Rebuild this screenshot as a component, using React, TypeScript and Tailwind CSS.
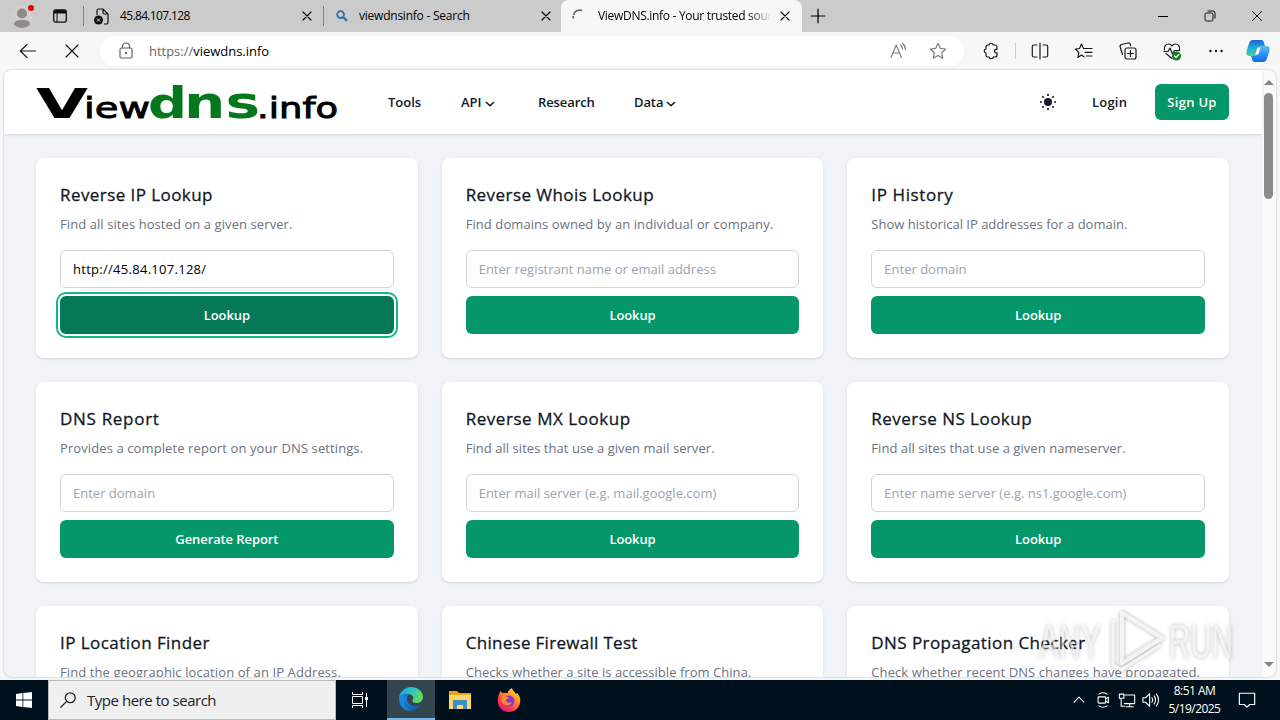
import type { ReactNode } from "react";

type Tool = {
  title: string;
  titleClass: string;
  text: string;
  textClass: string;
  placeholder?: string;
  value?: string;
  action: string;
  focused?: boolean;
};

const tools: Tool[] = [
  {
    title: "Reverse IP Lookup",
    titleClass: "tracking-[0.43px]",
    text: "Find all sites hosted on a given server.",
    textClass: "tracking-[0.08px]",
    value: "http://45.84.107.128/",
    action: "Lookup",
    focused: true,
  },
  {
    title: "Reverse Whois Lookup",
    titleClass: "tracking-[0.45px]",
    text: "Find domains owned by an individual or company.",
    textClass: "tracking-[0.08px]",
    placeholder: "Enter registrant name or email address",
    action: "Lookup",
  },
  {
    title: "IP History",
    titleClass: "tracking-[0.6px]",
    text: "Show historical IP addresses for a domain.",
    textClass: "tracking-[0px]",
    placeholder: "Enter domain",
    action: "Lookup",
  },
  {
    title: "DNS Report",
    titleClass: "tracking-[0.7px]",
    text: "Provides a complete report on your DNS settings.",
    textClass: "tracking-[0.1px]",
    placeholder: "Enter domain",
    action: "Generate Report",
  },
  {
    title: "Reverse MX Lookup",
    titleClass: "tracking-[0.55px]",
    text: "Find all sites that use a given mail server.",
    textClass: "tracking-[0.05px]",
    placeholder: "Enter mail server (e.g. mail.google.com)",
    action: "Lookup",
  },
  {
    title: "Reverse NS Lookup",
    titleClass: "tracking-[0.47px]",
    text: "Find all sites that use a given nameserver.",
    textClass: "tracking-[0.05px]",
    placeholder: "Enter name server (e.g. ns1.google.com)",
    action: "Lookup",
  },
  {
    title: "IP Location Finder",
    titleClass: "tracking-[0.45px]",
    text: "Find the geographic location of an IP Address.",
    textClass: "tracking-[0.1px]",
    placeholder: "Enter IP",
    action: "Lookup",
  },
  {
    title: "Chinese Firewall Test",
    titleClass: "tracking-[0.3px]",
    text: "Checks whether a site is accessible from China.",
    textClass: "tracking-[0.04px]",
    placeholder: "Enter domain",
    action: "Lookup",
  },
  {
    title: "DNS Propagation Checker",
    titleClass: "tracking-[0.43px]",
    text: "Check whether recent DNS changes have propagated.",
    textClass: "tracking-[0.07px]",
    placeholder: "Enter domain",
    action: "Lookup",
  },
];

function Stroke({ className, width = 1.2, children }: { className: string; width?: number; children: ReactNode }) {
  return (
    <svg
      viewBox="0 0 20 20"
      className={`shrink-0 ${className}`}
      fill="none"
      stroke="currentColor"
      strokeWidth={width}
      strokeLinecap="round"
      strokeLinejoin="round"
      aria-hidden="true"
    >
      {children}
    </svg>
  );
}

function CloseIcon({ className }: { className: string }) {
  return (
    <Stroke className={className} width={2.2}>
      <path d="M2 2l16 16M18 2L2 18" />
    </Stroke>
  );
}

function TabStrip() {
  return (
    <div className="flex h-8 shrink-0 bg-[#cbcbcb] text-[12px] text-black">
      <div className="flex w-[83px] items-center">
        <svg viewBox="0 0 24 24" className="ml-2.5 h-6 w-6 shrink-0" aria-hidden="true">
          <circle cx="12" cy="13" r="11" fill="#d2cfce" />
          <circle cx="12" cy="9.500" r="5" fill="#8f8b89" />
          <path d="M4 20.500c0-4 4-4.500 8-4.500s8 .5 8 4.500c-2 2.500-5 3.300-8 3.300s-6-.8-8-3.300z" fill="#8f8b89" />
          <circle cx="21" cy="4" r="3" fill="#e3000f" />
        </svg>
        <svg viewBox="0 0 14 14" className="ml-[19px] h-3.5 w-3.5 shrink-0" aria-hidden="true">
          <rect x=".7" y=".9" width="12.600" height="12.200" rx="2" fill="none" stroke="#111" strokeWidth="1.300" />
          <path d="M1 4.500V3a2 2 0 012-2h8a2 2 0 012 2v1.500z" fill="#111" />
          <path d="M4 4v9" stroke="#111" />
        </svg>
      </div>
      <div className="flex w-60 items-center">
        <span className="h-5 w-px bg-[#858585]" />
        <svg viewBox="0 0 16 17" className="ml-2.5 h-[17px] w-4 shrink-0" aria-hidden="true">
          <path
            d="M3 7V2.500A1.500 1.500 0 014.500 1H9l5 5v8.500a1.500 1.500 0 01-1.500 1.500H10M9 1v3.500A1.500 1.500 0 0010.500 6H14"
            fill="none"
            stroke="#111"
            strokeWidth="1.200"
          />
          <circle cx="4.500" cy="12" r="4.500" fill="#111" />
          <path d="M3 10.500l3 3M6 10.500l-3 3" stroke="#ddd" />
        </svg>
        <span className="ml-2.5 w-44 whitespace-nowrap tracking-[-0.65px]">45.84.107.128</span>
        <CloseIcon className="ml-1.5 h-2.5 w-2.5" />
      </div>
      <div className="flex w-[238px] items-center">
        <span className="h-5 w-px bg-[#858585]" />
        <svg viewBox="0 0 12 12" className="ml-3 h-3 w-3 shrink-0" fill="none" stroke="#2f72ae" aria-hidden="true">
          <circle cx="4.600" cy="4.600" r="3.400" strokeWidth="1.800" />
          <path d="M7.300 7.300l3.600 3.600" strokeWidth="2.200" />
        </svg>
        <span className="ml-[11px] w-[178px] whitespace-nowrap tracking-[-0.23px]">viewdnsinfo - Search</span>
        <CloseIcon className="ml-1 h-2.5 w-2.5" />
      </div>
      <div className="flex w-[241px] items-center rounded-t-lg bg-[#f7f7f7]">
        <svg viewBox="0 0 16 16" className="ml-2.5 h-4 w-4 shrink-0" fill="none" stroke="#666" aria-hidden="true">
          <path d="M2.200 10.500v-2.500M2.500 7A6.500 6.500 0 0111 2.500" strokeWidth="1.700" />
        </svg>
        <span className="ml-[11px] w-[174px] overflow-hidden bg-linear-to-r from-black from-86% to-transparent bg-clip-text tracking-[-0.3px] whitespace-nowrap text-transparent">
          ViewDNS.info - Your trusted source
        </span>
        <CloseIcon className="ml-2 h-2.5 w-2.5" />
      </div>
      <Stroke className="mt-2 ml-2 h-4 w-4" width={1.5}>
        <path d="M1.500 10h17M10 1.500v17" />
      </Stroke>
      <div className="ml-auto flex items-center">
        <span className="mr-9 h-px w-2.5 bg-black" />
        <svg viewBox="0 0 12 12" className="mr-[35px] h-3 w-3" fill="none" stroke="#111" aria-hidden="true">
          <rect x="1" y="3" width="8" height="8" rx="1.500" />
          <path d="M3.500 1H9a2 2 0 012 2v5.500" />
        </svg>
        <svg viewBox="0 0 12 12" className="mr-[17px] h-3 w-3" stroke="#111" aria-hidden="true">
          <path d="M1 1l10 10M11 1L1 11" />
        </svg>
      </div>
    </div>
  );
}

function Toolbar() {
  return (
    <div className="flex h-[38px] shrink-0 items-center bg-[#f7f7f7] text-[#1a1a1a]">
      <Stroke className="ml-[18px] h-5 w-5">
        <path d="M2.500 10h15M9 3.500L2.300 10 9 16.500" />
      </Stroke>
      <Stroke className="ml-6 h-5 w-5">
        <path d="M4 4l12 12M16 4L4 16" />
      </Stroke>
      <div className="ml-[18px] flex h-[30px] w-[864px] items-center rounded-full bg-white">
        <Stroke className="ml-4 h-5 w-5 text-[#666]">
          <path d="M6.500 7V5.500a3.500 3.500 0 017 0V7" />
          <rect x="4" y="7" width="12" height="10" rx="1.500" />
          <circle cx="10" cy="12" r=".6" fill="currentColor" />
        </Stroke>
        <span className="mt-px ml-[13px] text-[13px] tracking-[-0.02px] text-[#666]">
          https://<span className="text-black">viewdns.info</span>
        </span>
        <Stroke className="ml-auto h-5 w-5 text-[#7d7d7d]">
          <path d="M3 16.500L8.200 4l5.200 12.500M5 12h6.500M12.500 4c1.300.9 1.900 2.200 2 4M14.500 2.500c2 1.500 3 3.300 3 6" />
        </Stroke>
        <Stroke className="mr-4 ml-5 h-5 w-5 text-[#7d7d7d]">
          <path d="M10 2.300l2.300 5 5.400.7-4 3.800 1 5.500-4.700-2.700-4.700 2.700 1-5.500-4-3.800 5.400-.7z" />
        </Stroke>
      </div>
      <Stroke className="ml-[17px] h-5 w-5">
        <path d="M6.500 4H8a2.200 2.200 0 014.300 0H14a2 2 0 012 2v2.300h-1.200a1.800 1.800 0 000 3.500H16V14a2 2 0 01-2 2h-1.600a2.200 2.200 0 01-4.300 0H6.500a1.500 1.500 0 01-1.500-1.500v-2.400a2.200 2.200 0 010-4.300V5.500A1.500 1.500 0 016.500 4z" />
      </Stroke>
      <span className="ml-3.5 h-4 w-px bg-[#ccc]" />
      <Stroke className="ml-3.5 h-5 w-5">
        <path d="M10 2v16M7 4H3.800A1.500 1.500 0 002.300 5.500v9A1.500 1.500 0 003.800 16H7M13 4h3.200a1.500 1.500 0 011.500 1.500v9a1.500 1.500 0 01-1.500 1.500H13" />
      </Stroke>
      <Stroke className="ml-6 h-5 w-5">
        <path d="M12 7.500L9.500 7.500 7.500 3 5.500 7.500 1.500 8.200l3.300 3.300-.9 5L7.500 14l2.500 1.800M12 7.500h6M11 11.300h7M12.500 15H18" />
      </Stroke>
      <Stroke className="ml-6 h-5 w-5">
        <rect x="7" y="7" width="11" height="11" rx="2" />
        <path d="M12.500 9.500v6M9.500 12.500h6M4.500 13.500L2.200 6a2 2 0 011.300-2.500L10 2a2 2 0 012.300 1.300l.4 1.400" />
      </Stroke>
      <Stroke className="ml-6 h-5 w-5">
        <path d="M2.500 9C1.500 5.500 4 3 6.500 3c1.700 0 2.800.8 3.500 2 .7-1.200 1.800-2 3.500-2C16 3 18.500 5.500 17.500 9M2 10.500h4L8 7l2.500 6 2-3.500h5M4 12.500l6 5" />
        <circle cx="14.500" cy="15" r="4.500" fill="#14801c" stroke="none" />
        <path d="M12.500 15l1.500 1.500 2.700-3" stroke="white" />
      </Stroke>
      <svg viewBox="0 0 16 4" className="ml-[26px] h-1 w-4" fill="#111" aria-hidden="true">
        <circle cx="2.500" cy="2" r="1.200" />
        <circle cx="8" cy="2" r="1.200" />
        <circle cx="13.500" cy="2" r="1.200" />
      </svg>
      <svg viewBox="0 0 24 24" className="ml-[22px] h-6 w-6 shrink-0" aria-hidden="true">
        <defs>
          <linearGradient id="copilotLeft" x1="0" y1="0" x2="0" y2="1">
            <stop stopColor="#1466d8" />
            <stop offset=".5" stopColor="#23a9d8" />
            <stop offset="1" stopColor="#4bd39a" />
          </linearGradient>
          <linearGradient id="copilotRight" x1="0" y1="0" x2="0" y2="1">
            <stop stopColor="#52bdf5" />
            <stop offset="1" stopColor="#1267e9" />
          </linearGradient>
        </defs>
        <path d="M7 1h8c2 0 2.500 1.200 3 3l1 3h-3c-2 0-3 1-3.600 3L11 15c-.5 1.500-1.300 2-3 2H3.500C.5 17 0 14.500.6 12L3 4.500C3.700 2.300 4.800 1 7 1z" fill="url(#copilotLeft)" />
        <path d="M17 23H9c-2 0-2.500-1.200-3-3l-1-3h3c2 0 3-1 3.600-3L13 9c.5-1.500 1.300-2 3-2h4.500c3 0 3.500 2.500 2.900 5L21 19.500c-.7 2.200-1.800 3.500-4 3.500z" fill="url(#copilotRight)" />
        <path d="M11.500 8.500h3l-2.200 7H9.300z" fill="white" />
      </svg>
    </div>
  );
}

function Logo() {
  return (
    <svg viewBox="0 -20 302 80" className="h-20 w-[302px] shrink-0" role="img" aria-label="ViewDNS.info">
      <g fontFamily="'DejaVu Sans', sans-serif" fontWeight="700">
        <text x="0" y="36" fontSize="41" textLength="52" lengthAdjust="spacingAndGlyphs">V</text>
        <text x="48" y="36" fontSize="29" fontWeight="400" stroke="black" strokeWidth=".9" textLength="66" lengthAdjust="spacingAndGlyphs">iew</text>
        <text x="112" y="36" fontSize="43" fill="#06781c" textLength="39" lengthAdjust="spacingAndGlyphs">d</text>
        <text x="148" y="36" fontSize="45" fill="#06781c" textLength="76" lengthAdjust="spacingAndGlyphs">ns</text>
        <text x="221" y="36" fontSize="28" fontWeight="400" stroke="black" strokeWidth=".9" textLength="81" lengthAdjust="spacingAndGlyphs">.info</text>
      </g>
    </svg>
  );
}

function Chevron() {
  return (
    <Stroke className="mt-0.5 ml-[3px] h-2.5 w-2.5" width={3.2}>
      <path d="M3 7l7 6.500L17 7" />
    </Stroke>
  );
}

function SiteHeader() {
  return (
    <header className="relative z-10 flex h-16 shrink-0 items-center bg-white pr-[33px] pl-8 text-[13px] font-semibold text-[#111827] shadow">
      <Logo />
      <nav className="mt-0.5 ml-[50px] flex items-center" aria-label="Main navigation">
        <a href="#" className="w-[73px]">Tools</a>
        <a href="#" className="flex w-[77px] items-center">
          API
          <Chevron />
        </a>
        <a href="#" className="w-24 tracking-[-0.1px]">Research</a>
        <a href="#" className="flex items-center tracking-[-0.1px]">
          Data
          <Chevron />
        </a>
      </nav>
      <svg viewBox="0 0 16 16" className="ml-auto h-4 w-4" fill="#111827" aria-hidden="true">
        <circle cx="8" cy="8" r="4" />
        <path
          d="M8 0v2M8 14v2M0 8h2M14 8h2M2.300 2.300l1.400 1.400M12.300 12.300l1.400 1.400M13.700 2.300l-1.400 1.400M3.700 12.300l-1.400 1.400"
          stroke="#111827"
          strokeWidth="1.700"
        />
      </svg>
      <a href="#" className="mt-0.5 ml-9 w-[63px] tracking-[0.2px]">Login</a>
      <a
        href="#"
        className="flex h-9 w-[74px] items-center justify-center rounded-md bg-[#059669] pt-0.5 tracking-[0.3px] text-white"
      >
        Sign Up
      </a>
    </header>
  );
}

function ToolCard({ tool }: { tool: Tool }) {
  return (
    <section className="h-[200px] rounded-lg bg-white p-6 shadow-sm">
      <h2
        className={`-mt-px text-[17px] leading-7 font-medium whitespace-nowrap text-[#111827] [-webkit-text-stroke:0.3px_#111827] ${tool.titleClass}`}
      >
        {tool.title}
      </h2>
      <p className={`mt-[5px] text-[13px] leading-5 whitespace-nowrap text-[#6b7280] ${tool.textClass}`}>
        {tool.text}
      </p>
      <input
        type="text"
        aria-label={tool.title}
        defaultValue={tool.value}
        placeholder={tool.placeholder}
        className={`mt-4 block h-[38px] w-full rounded-md border border-[#d1d5db] bg-white px-3 text-[13px] text-black placeholder:text-[#9ca3af] ${
          tool.value ? "tracking-[0.28px]" : ""
        }`}
      />
      <button
        type="button"
        className={`mt-2 block h-[38px] w-full rounded-md pt-0.5 text-[13px] font-semibold tracking-[-0.1px] text-white ${
          tool.focused ? "bg-[#047857] ring-2 ring-[#10b981] ring-offset-2" : "bg-[#059669]"
        }`}
      >
        {tool.action}
      </button>
    </section>
  );
}

function Scrollbar() {
  return (
    <div className="flex w-3.5 shrink-0 flex-col items-center justify-between bg-[#fafafa] py-2.5 pr-px">
      <div className="flex flex-col items-center">
        <span className="border-x-[5px] border-b-[5px] border-x-transparent border-b-[#858585]" />
        <span className="mt-2 h-[106px] w-[9px] rounded-full bg-[#8b8b8b]" />
      </div>
      <span className="border-x-[5px] border-t-[5px] border-x-transparent border-t-[#858585]" />
    </div>
  );
}

function Watermark() {
  return (
    <svg
      viewBox="0 0 200 68"
      className="pointer-events-none absolute top-[606px] left-[1036px] h-[68px] w-[200px] drop-shadow-[0_0_2px_rgba(0,0,0,0.4)]"
      aria-hidden="true"
    >
      <g fill="white" fillOpacity=".6" fontFamily="'Liberation Sans', sans-serif" fontSize="48">
        <text x="3" y="52" textLength="62" lengthAdjust="spacingAndGlyphs">ANY</text>
        <text x="133" y="52" textLength="64" lengthAdjust="spacingAndGlyphs">RUN</text>
      </g>
      <g fill="none" stroke="white" strokeOpacity=".75" strokeWidth="4" strokeLinejoin="round">
        <path d="M86 7l40 25-40 25z" />
        <path d="M77 14v45l8 5 39-25" strokeWidth="3" />
      </g>
    </svg>
  );
}

function Taskbar() {
  return (
    <footer className="flex h-10 shrink-0 items-center bg-[#00101c] text-white">
      <div className="flex w-12 justify-center">
        <svg viewBox="0 0 16 16" className="h-4 w-4" fill="white" aria-hidden="true">
          <path d="M0 2l6.500-.9v6.500H0zM7.300 1L16 0v7.600H7.300zM0 8.400h6.500v6.500L0 14zM7.300 8.400H16V16l-8.700-1z" />
        </svg>
      </div>
      <div className="flex h-10 w-72 items-center border border-[#bbb] bg-[#f0f0f0] text-[#222]">
        <Stroke className="ml-2.5 h-[18px] w-[18px]" width={1.4}>
          <circle cx="12.500" cy="7.500" r="5.500" />
          <path d="M8.500 11.500L2 18" />
        </Stroke>
        <span className="ml-2.5 text-[15px] tracking-[-0.47px]">Type here to search</span>
      </div>
      <div className="flex w-[51px] justify-center pr-1">
        <svg viewBox="0 0 18 18" className="h-[18px] w-[18px]" fill="none" stroke="white" aria-hidden="true">
          <path d="M1.500 1v2.500h10V1M1.500 17v-2.500h10V17M1.500 5.500h10v7h-10zM15.500 2v14" />
          <path d="M14 6h3v3h-3z" fill="white" stroke="none" />
        </svg>
      </div>
      <div className="flex h-10 w-12 items-center justify-center border-b-2 border-[#76b9ed] bg-[#334650]">
        <svg viewBox="0 0 24 24" className="h-6 w-6" aria-hidden="true">
          <defs>
            <linearGradient id="edgeTop" x1="0" y1="0" x2="1" y2=".4">
              <stop stopColor="#1793d8" />
              <stop offset=".5" stopColor="#2bc3d2" />
              <stop offset="1" stopColor="#62d957" />
            </linearGradient>
            <linearGradient id="edgeBottom" x1="0" y1="0" x2="1" y2="1">
              <stop stopColor="#1c8fe0" />
              <stop offset="1" stopColor="#0c4f9d" />
            </linearGradient>
          </defs>
          <path d="M0 12C0 5 5.500 0 12 0c7 0 12 4.700 12 10 0 3.700-2.700 6-6.200 6-3 0-4.500-1-4.500-2 0-.8 1-1.200 1-3 0-2.200-2-4-5-4-4 0-8 2.500-9.300 5z" fill="url(#edgeTop)" />
          <path d="M0 12c1-4 4.500-6 8.500-5.500C6 8 5 10.500 5 13c0 5 3 9 7.500 10.800C5.500 24.500 0 19 0 12z" fill="#1687dc" />
          <path d="M5 13c0-3 2-5.700 5-6-1.500 1.500-2 3-2 5 0 4 3.300 7 8 7 2.400 0 4.500-.7 6-1.500-1.500 3.800-6 6.500-10 6.300C8 22.500 5 18 5 13z" fill="url(#edgeBottom)" />
        </svg>
      </div>
      <svg viewBox="0 0 22 20" className="ml-3.5 h-5 w-[22px]" aria-hidden="true">
        <path d="M0 1h8l2 2h12v16H0z" fill="#eaa51b" />
        <path d="M0 5h22v14H0z" fill="#ffd766" />
        <path d="M4 10h14v9h-4v-4H8v4H4z" fill="#3c8fca" />
      </svg>
      <svg viewBox="0 0 24 24" className="ml-[26px] h-6 w-6" aria-hidden="true">
        <defs>
          <linearGradient id="foxFlame" x1="1" y1="0" x2=".3" y2="1">
            <stop stopColor="#fff03f" />
            <stop offset=".4" stopColor="#ff9a1f" />
            <stop offset=".75" stopColor="#ff3f4d" />
            <stop offset="1" stopColor="#e31587" />
          </linearGradient>
        </defs>
        <path d="M2.500 5l1-2 2 2.200c2-.8 4-.5 5 .2C11 3 13 1 15 0c.5 3 3 3.500 4 6l1-1c3 3 3.800 6 3 10-1 5.500-5.500 9-11 9C5.500 24 .8 19.300.8 13c0-3 .7-5.500 1.700-8z" fill="url(#foxFlame)" />
        <circle cx="12" cy="13" r="5.500" fill="#8238d8" />
        <path d="M5.500 8c3 0 5 0 6.500 2.500-2 0-3.500 1-3 2.500.7 2 4 2 6 1-1 3-5 4.500-8 2.500S4 11 5.500 8z" fill="#ff8a25" />
      </svg>
      <div className="ml-auto flex items-center">
        <Stroke className="h-3.5 w-3.5" width={1.6}>
          <path d="M3 13l7-7 7 7" />
        </Stroke>
        <Stroke className="ml-2 h-[18px] w-[18px]" width={1.2}>
          <path d="M5.500 3.500c3-2 6-2 9 0M5.500 16.500c3 2 6 2 9 0M13 8.500l3-1.500v6l-3-1.500" />
          <rect x="4.500" y="6.500" width="8.500" height="7" rx="1" />
        </Stroke>
        <Stroke className="ml-1.5 h-[18px] w-[18px]" width={1.2}>
          <path d="M6 4.500h12.500V14H7M9 17.500h8M13 14v3.500M3.500 9v8h4" />
          <path d="M1.500 3.500h5V8h-5z" fill="#00101c" />
        </Stroke>
        <Stroke className="ml-1.5 h-[18px] w-[18px]" width={1.2}>
          <path d="M1 7.500h3L8.500 3v14L4 12.500H1zM11 7.500c1 1.500 1 3.500 0 5M13.500 5.500c2 2.500 2 6.500 0 9M16 3.500c3 4 3 9 0 13" />
        </Stroke>
        <div className="ml-[7px] flex w-[55px] flex-col items-center text-[12px] leading-[18px] tracking-[-0.55px]">
          <span>8:51 AM</span>
          <span>5/19/2025</span>
        </div>
        <Stroke className="mr-6 ml-4 h-[18px] w-[18px]" width={1.3}>
          <path d="M1.500 2.500h17V15H13l-3 3-3-3H1.500z" />
        </Stroke>
      </div>
    </footer>
  );
}

export default function App() {
  return (
    <div className="relative flex h-[720px] w-[1280px] flex-col overflow-hidden bg-[#f7f7f7] font-['Open_Sans','Noto_Sans',sans-serif]">
      <TabStrip />
      <Toolbar />
      <div className="mx-1 mb-[3px] flex min-h-0 flex-1 overflow-hidden rounded-lg bg-[#f1f4f6] shadow-[0_0_2px_rgba(0,0,0,0.3)]">
        <div className="flex min-w-0 flex-1 flex-col">
          <SiteHeader />
          <main className="grid min-h-0 flex-1 grid-cols-3 content-start gap-6 overflow-hidden pt-6 pr-[33px] pl-8">
            {tools.map((tool) => (
              <ToolCard key={tool.title} tool={tool} />
            ))}
          </main>
        </div>
        <Scrollbar />
      </div>
      <Taskbar />
      <Watermark />
    </div>
  );
}
